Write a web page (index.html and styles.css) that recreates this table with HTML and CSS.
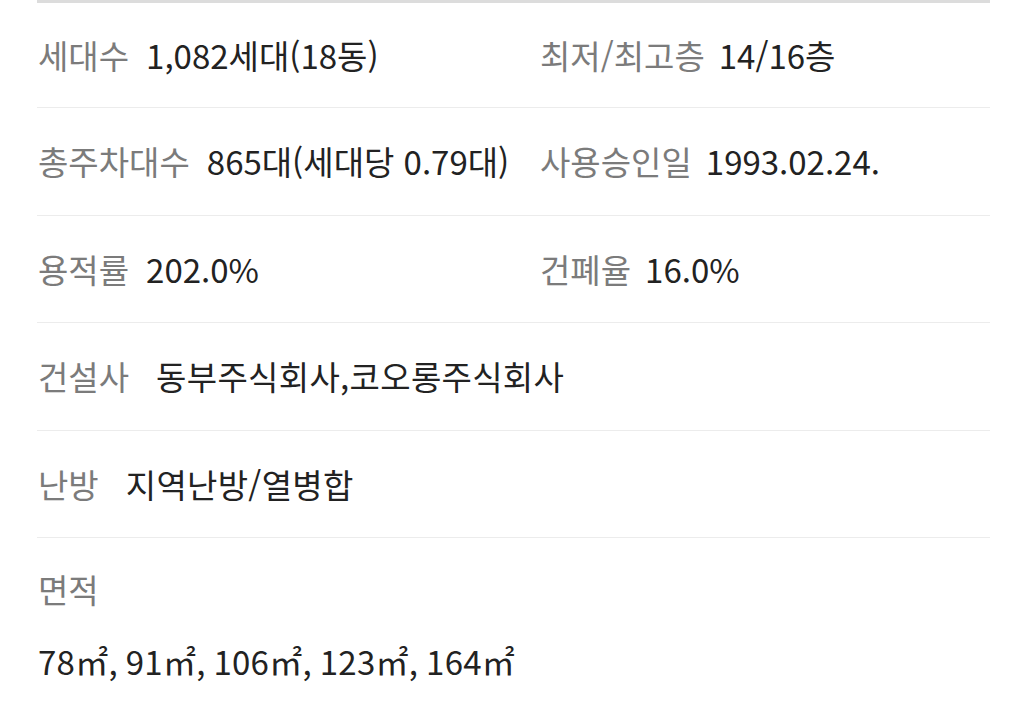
FILE: index.html
```html
<!DOCTYPE html>
<html lang="ko">
<head>
    <meta charset="UTF-8">
    <meta name="viewport" content="width=device-width, initial-scale=1.0">
    <title>단지정보</title>
    <link rel="stylesheet" href="styles.css">
</head>

<body>
    <div class="info">
        <div class="row two">
            <div class="cell"><span class="label">세대수</span><span class="value">1,082세대(18동)</span></div>
            <div class="cell"><span class="label">최저/최고층</span><span class="value">14/16층</span></div>
        </div>
        <div class="row two">
            <div class="cell"><span class="label">총주차대수</span><span class="value">865대(세대당 0.79대)</span></div>
            <div class="cell"><span class="label">사용승인일</span><span class="value">1993.02.24.</span></div>
        </div>
        <div class="row two">
            <div class="cell"><span class="label">용적률</span><span class="value">202.0%</span></div>
            <div class="cell"><span class="label">건폐율</span><span class="value">16.0%</span></div>
        </div>
        <div class="row single">
            <span class="label">건설사</span><span class="value">동부주식회사,코오롱주식회사</span>
        </div>
        <div class="row single">
            <span class="label">난방</span><span class="value">지역난방/열병합</span>
        </div>
        <div class="row area">
            <span class="label">면적</span>
            <span class="value">78㎡, 91㎡, 106㎡, 123㎡, 164㎡</span>
        </div>
    </div>
</body>

</html>
```

FILE: styles.css
```css
body {
    margin: 0;
    background-color: #fff;
    font-family: 'Noto Sans CJK KR', 'Noto Sans', sans-serif;
    color: #222;
    overflow: hidden;
}

.info {
    margin: 0 36px 0 37px;
    border-top: 3px solid #dcdcdc;
}

.row {
    height: 106.5px;
    border-bottom: 1px solid #ececec;
    font-size: 33px;
    display: flex;
    align-items: center;
    padding-left: 1px;
}

.row:first-child {
    height: 104px;
}

.row.two {
    display: grid;
    grid-template-columns: 502px 1fr;
    align-items: center;
}

.cell {
    display: flex;
    align-items: center;
}

.label {
    color: #7b7b7b;
    margin-right: 17px;
    white-space: nowrap;
}

.cell + .cell .label {
    margin-right: 14px;
}

.value {
    white-space: nowrap;
}

.single .label {
    margin-right: 27px;
}

.single .value {
    letter-spacing: 0.3px;
}

.row.area {
    border-bottom: none;
    height: auto;
    flex-direction: column;
    align-items: flex-start;
    padding-top: 27px;
    gap: 24px;
    line-height: 48px;
}

.area .value {
    letter-spacing: 0.3px;
}
```
